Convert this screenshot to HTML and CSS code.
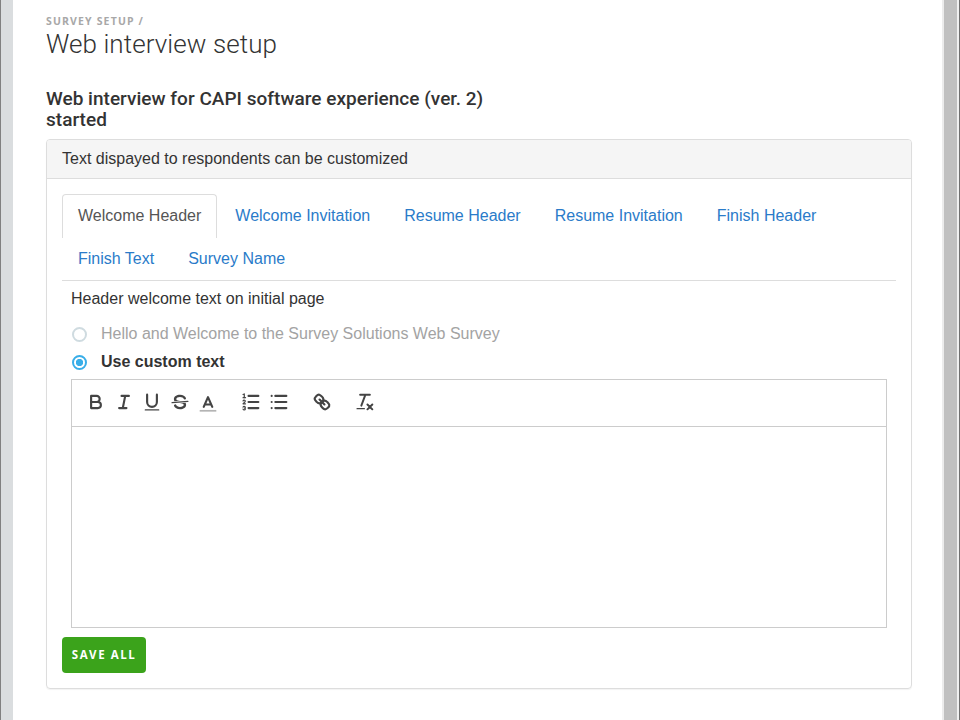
FILE: index.html
```html
<!DOCTYPE html>
<html lang="en">
<head>
<meta charset="utf-8">
<title>Web interview setup</title>
<link rel="stylesheet" href="styles.css">
</head>
<body>
<main class="page">
  <div class="breadcrumb">SURVEY SETUP /</div>
  <h1>Web interview setup</h1>
  <h2>Web interview for CAPI software experience (ver. 2)<br>started</h2>
  <section class="panel">
    <header class="panel-heading">Text dispayed to respondents can be customized</header>
    <div class="panel-body">
      <nav class="tabs">
        <a class="tab active">Welcome Header</a>
        <a class="tab">Welcome Invitation</a>
        <a class="tab">Resume Header</a>
        <a class="tab">Resume Invitation</a>
        <a class="tab">Finish Header</a>
        <a class="tab">Finish Text</a>
        <a class="tab">Survey Name</a>
      </nav>
      <div class="tab-content">
        <p class="caption">Header welcome text on initial page</p>
        <div class="option"><span class="radio"></span><span>Hello and Welcome to the Survey Solutions Web Survey</span></div>
        <div class="option selected"><span class="radio"></span><span>Use custom text</span></div>
        <div class="editor">
          <div class="toolbar">
            <div class="group">
              <svg viewBox="0 0 18 18"><path d="M5,4H9.5A2.5,2.5,0,0,1,9.5,9H5Z"/><path d="M5,9h5.5A2.5,2.5,0,0,1,10.5,14H5Z"/></svg>
              <svg viewBox="0 0 18 18"><path d="M7,4H13M5,14H11M8,14L10,4"/></svg>
              <svg viewBox="0 0 18 18"><path d="M5,3V9a4.012,4.012,0,0,0,4,4H9a4.012,4.012,0,0,0,4-4V3"/><rect class="fill" height="1" rx="0.5" width="12" x="3" y="15"/></svg>
              <svg viewBox="0 0 18 18"><path class="thin" d="M15.5,8.5L2.5,9.5"/><path class="fill" d="M9.007,8C6.542,7.791,6,7.519,6,6.5,6,5.792,7.283,5,9,5c1.571,0,2.765.679,2.969,1.309a1,1,0,0,0,1.9-.617C13.356,4.106,11.354,3,9,3,6.2,3,4,4.538,4,6.5a3.2,3.2,0,0,0,.5,1.843Z"/><path class="fill" d="M8.984,10C11.457,10.208,12,10.479,12,11.5c0,.708-1.283,1.5-3,1.5-1.571,0-2.765-.679-2.969-1.309a1,1,0,1,0-1.9.617C4.644,13.894,6.646,15,9,15c2.8,0,5-1.538,5-3.5a3.2,3.2,0,0,0-.5-1.843Z"/></svg>
              <svg viewBox="0 0 18 18"><path class="label" d="M2.2,16.2H15.8"/><path d="M5.5,13L9,5L12.5,13M11.63,11H6.38"/></svg>
            </div>
            <div class="group">
              <svg viewBox="0 0 18 18"><path d="M7,4H15M7,9H15M7,14H15"/><path class="thin" d="M2.5,5.5H4.5"/><path class="fill" d="M3.5,6A0.5,0.5,0,0,1,3,5.5V3.085l-0.276.138A0.5,0.5,0,0,1,2.053,3c-0.124-.247-0.023-0.324.224-0.447l1-.5A0.5,0.5,0,0,1,4,2.5v3A0.5,0.5,0,0,1,3.5,6Z"/><path class="thin" d="M4.5,10.5h-2c0-.234,1.85-1.076,1.85-2.234A0.959,0.959,0,0,0,2.5,8.156"/><path class="thin" d="M2.5,14.846a0.959,0.959,0,0,0,1.85-.109A0.7,0.7,0,0,0,3.75,14a0.688,0.688,0,0,0,.6-0.736,0.959,0.959,0,0,0-1.85-.109"/></svg>
              <svg viewBox="0 0 18 18"><path d="M6,4H15M6,9H15M6,14H15M3,4H3M3,9H3M3,14H3"/></svg>
            </div>
            <div class="group">
              <svg viewBox="0 0 18 18"><path d="M7,7L11,11"/><path d="M8.9,4.577a3.476,3.476,0,0,1,.36,4.679A3.476,3.476,0,0,1,4.577,8.9C3.185,7.5,2.035,6.4,4.217,4.217S7.5,3.185,8.9,4.577Z"/><path d="M13.423,9.1a3.476,3.476,0,0,0-4.679-.36,3.476,3.476,0,0,0,.36,4.679c1.392,1.392,2.5,2.542,4.679.36S14.815,10.5,13.423,9.1Z"/></svg>
            </div>
            <div class="group">
              <svg viewBox="0 0 18 18"><path class="medium" d="M5,3H13M6,12L9.35,3M11,11L15,15M15,11L11,15"/><rect class="fill" height="1" rx="0.5" width="7" x="2" y="14"/></svg>
            </div>
          </div>
          <div class="canvas"></div>
        </div>
      </div>
      <button class="save">SAVE ALL</button>
    </div>
  </section>
</main>
<div class="scrollbar"></div>
</body>
</html>
```
FILE: styles.css
```css
* { box-sizing: border-box; }
body {
  margin: 0;
  height: 720px;
  overflow: hidden;
  display: flex;
  border-left: 1px solid #808080;
  border-right: 1px solid #707070;
  background: #fff;
  color: #333;
  font: 16px/20px "Liberation Sans", Arial, sans-serif;
}
.page {
  flex: 1;
  border-left: 12px solid #dadddf;
  padding: 14px 30px 0 33px;
}
.scrollbar {
  width: 17px;
  background: #c0c0c0;
  border-left: 2px solid #ececec;
  border-right: 2px solid #f0f0f0;
}
.breadcrumb {
  font: bold 10.5px/14px "Open Sans", sans-serif;
  letter-spacing: 1.15px;
  color: #a8a8a8;
}
h1 {
  margin: 0;
  font: 300 26px/32px Roboto, sans-serif;
  letter-spacing: .08px;
  color: #333;
}
h2 {
  margin: 28px 0 9px;
  font: 500 19px/21px Roboto, sans-serif;
  letter-spacing: .02px;
  color: #333;
}
.panel {
  height: 550px;
  border: 1px solid #ddd;
  border-radius: 4px;
  box-shadow: 0 1px 1px rgba(0, 0, 0, .05);
}
.panel-heading {
  height: 39px;
  padding: 9px 15px;
  background: #f5f5f5;
  border-bottom: 1px solid #ddd;
  border-radius: 3px 3px 0 0;
}
.panel-body { padding: 15px; }
.tabs {
  display: flex;
  flex-wrap: wrap;
  column-gap: 2px;
  height: 87px;
  border-bottom: 1px solid #ddd;
}
.tab {
  height: 43px;
  padding: 11px 15px;
  border: 1px solid transparent;
  border-bottom: 0;
  border-radius: 4px 4px 0 0;
  color: #2a7bc9;
}
.tab.active {
  height: 44px;
  margin-bottom: -1px;
  border-color: #ddd;
  color: #555;
}
.tab-content { padding: 8px 9px 0; }
.caption { margin: 0 0 12px; }
.option {
  display: flex;
  align-items: center;
  gap: 14px;
  height: 28px;
  color: #a3a3a3;
}
.option > span:last-child { margin-top: -2px; }
.option.selected { color: #333; font-weight: bold; }
.radio {
  width: 15px;
  height: 15px;
  margin: -1px 0 0 1px;
  border: 2px solid #cfdbe0;
  border-radius: 50%;
}
.selected .radio {
  border-color: #39aee8;
  background: radial-gradient(circle, #39aee8 3.3px, #fff 4px);
}
.editor { margin-top: 2px; height: 249px; border: 1px solid #ccc; }
.toolbar {
  display: flex;
  gap: 18px;
  height: 47px;
  padding: 0 10px 2px;
  border-bottom: 1px solid #ccc;
}
.group { display: flex; gap: 6px; align-items: center; padding: 0 3px 0 3px; }
.group + .group { padding-left: 0; }
.group svg {
  width: 22px;
  height: 22px;
  fill: none;
  stroke: #444;
  stroke-width: 1.75;
  stroke-linecap: round;
  stroke-linejoin: round;
}
.group .thin { stroke-width: 1; }
.group .medium { stroke-width: 1.6; }
.group .fill { fill: #444; stroke: none; }
.group .label { stroke: #b4b4b4; stroke-width: 1.4; stroke-linecap: butt; }
.save {
  display: block;
  width: 84px;
  height: 36px;
  margin-top: 9px;
  padding: 0;
  border: 0;
  border-radius: 4px;
  background: #3ba31b;
  color: #fff;
  font: bold 11.5px/36px "Open Sans", sans-serif;
  letter-spacing: 1.55px;
}
```
